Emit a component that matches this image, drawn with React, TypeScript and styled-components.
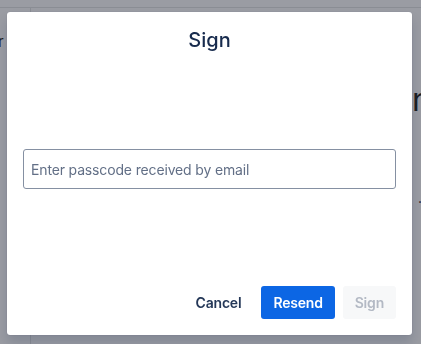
import styled, { createGlobalStyle } from 'styled-components'

const colors = {
  backdrop: '#9a9ca3',
  backdropLine: '#8a8d94',
  backdropText: '#1e2024',
  white: '#ffffff',
  text: '#172b4d',
  subtle: '#253858',
  placeholder: '#626f86',
  border: '#8590a2',
  brand: '#0c66e4',
  disabledBg: '#f7f8f9',
  disabledText: '#b3b9c4'
}

const GlobalStyle = createGlobalStyle`
  html, body {
    margin: 0;
    padding: 0;
    height: 100%;
  }
  body {
    font-family: Inter, "Noto Sans", sans-serif;
    background: ${colors.backdrop};
    overflow: hidden;
  }
  #root {
    height: 100%;
  }
`

// the page sitting behind the blanket, already dimmed
const Page = styled.div`
  height: 344px;
  display: flex;
  flex-direction: column;
  background: ${colors.backdrop};
  color: ${colors.backdropText};
`

const TopBar = styled.div`
  height: 7px;
  border-bottom: 1px solid ${colors.backdropLine};
`

const PageBody = styled.div`
  flex: 1;
  display: flex;
`

const Sidebar = styled.div`
  width: 30px;
  border-right: 1px solid ${colors.backdropLine};
  overflow: hidden;
  padding-top: 24px;
  font-size: 15px;
  text-indent: -8px;
`

const Main = styled.div`
  flex: 1;
  display: flex;
  flex-direction: column;
  align-items: flex-end;
  padding-top: 72px;
  overflow: hidden;
`

const Heading = styled.div`
  font-size: 32px;
  margin-right: -10px;
`

const Dot = styled.div`
  font-size: 14px;
  margin-top: 70px;
  margin-right: -1px;
`

const Modal = styled.div`
  position: fixed;
  left: 7px;
  top: 12px;
  width: 405px;
  height: 323px;
  box-sizing: border-box;
  background: ${colors.white};
  border-radius: 3px;
  box-shadow: 0 0 1px rgba(9, 30, 66, 0.31), 0 8px 12px rgba(9, 30, 66, 0.15);
  padding: 16px;
  display: flex;
  flex-direction: column;
`

const Title = styled.h1`
  margin: 0;
  font-size: 20px;
  line-height: 24px;
  font-weight: 500;
  color: ${colors.text};
  text-align: center;
`

const Body = styled.div`
  flex: 1;
  display: flex;
  flex-direction: column;
  padding-top: 97px;
`

const Input = styled.input`
  box-sizing: border-box;
  width: 100%;
  height: 40px;
  border: 1px solid ${colors.border};
  border-radius: 3px;
  padding: 0 7px;
  font-family: inherit;
  font-size: 14px;
  letter-spacing: -0.15px;
  color: ${colors.text};
  outline: none;

  &::placeholder {
    color: ${colors.placeholder};
  }
`

const Footer = styled.div`
  display: flex;
  justify-content: flex-end;
  gap: 8px;
`

const Button = styled.button<{ $variant: 'subtle' | 'primary' | 'disabled' }>`
  height: 33px;
  padding: 0 12px;
  border: none;
  border-radius: 3px;
  font-family: inherit;
  font-size: 14px;
  font-weight: 600;
  letter-spacing: -0.2px;
  cursor: pointer;
  background: ${({ $variant }) =>
    $variant === 'primary' ? colors.brand : $variant === 'disabled' ? colors.disabledBg : 'transparent'};
  color: ${({ $variant }) =>
    $variant === 'primary' ? colors.white : $variant === 'disabled' ? colors.disabledText : colors.subtle};
`

function App (): JSX.Element {
  return (
    <>
      <GlobalStyle />
      <Page>
        <TopBar />
        <PageBody>
          <Sidebar>rr</Sidebar>
          <Main>
            <Heading>n</Heading>
            <Dot>.</Dot>
          </Main>
        </PageBody>
      </Page>
      <Modal>
        <Title>Sign</Title>
        <Body>
          <Input placeholder='Enter passcode received by email' />
        </Body>
        <Footer>
          <Button $variant='subtle'>Cancel</Button>
          <Button $variant='primary'>Resend</Button>
          <Button $variant='disabled' disabled>Sign</Button>
        </Footer>
      </Modal>
    </>
  )
}

export default App
